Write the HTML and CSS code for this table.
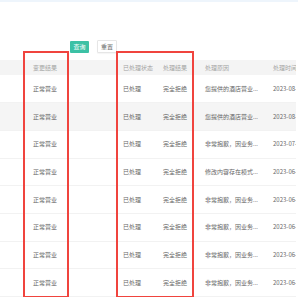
FILE: index.html
```html
<!DOCTYPE html>
<html lang="zh">
<head>
<meta charset="utf-8">
<link rel="stylesheet" href="styles.css">
</head>
<body>
<div class="topbar"></div>
<div class="toolbar">
  <button class="btn btn-primary">查询</button>
  <button class="btn">重置</button>
</div>
<div class="table-wrap">
  <table class="grid">
    <colgroup>
      <col class="c0"><col class="c1"><col class="c2"><col class="c3"><col class="c4"><col class="c5">
    </colgroup>
    <thead>
      <tr><th></th><th>变更结果</th><th>已处理状态</th><th>处理结果</th><th>处理原因</th><th>处理时间</th></tr>
    </thead>
    <tbody>
      <tr><td></td><td>正常营业</td><td>已处理</td><td>完全拒绝</td><td>您提供的酒店营业...</td><td>2023-08-03</td></tr>
      <tr class="hover"><td></td><td>正常营业</td><td>已处理</td><td>完全拒绝</td><td>您提供的酒店营业...</td><td>2023-08-01</td></tr>
      <tr><td></td><td>正常营业</td><td>已处理</td><td>完全拒绝</td><td>非常抱歉，因业务...</td><td>2023-07-05</td></tr>
      <tr><td></td><td>正常营业</td><td>已处理</td><td>完全拒绝</td><td>修改内容存在模式...</td><td>2023-06-16</td></tr>
      <tr><td></td><td>正常营业</td><td>已处理</td><td>完全拒绝</td><td>非常抱歉，因业务...</td><td>2023-06-12</td></tr>
      <tr><td></td><td>正常营业</td><td>已处理</td><td>完全拒绝</td><td>非常抱歉，因业务...</td><td>2023-06-10</td></tr>
      <tr><td></td><td>正常营业</td><td>已处理</td><td>完全拒绝</td><td>非常抱歉，因业务...</td><td>2023-06-08</td></tr>
      <tr><td></td><td>正常营业</td><td>已处理</td><td>完全拒绝</td><td>非常抱歉，因业务...</td><td>2023-06-15</td></tr>
    </tbody>
  </table>
  <div class="mark mark-a"></div>
  <div class="mark mark-b"></div>
</div>
</body>
</html>
```

FILE: styles.css
```css
html, body {
  margin: 0;
  padding: 0;
  background: #ffffff;
  font-family: "Noto Sans CJK SC", "Noto Sans", sans-serif;
  overflow: hidden;
}

.topbar {
  width: 298px;
  height: 2px;
  background: #eef5fc;
}

.toolbar {
  height: 58px;
  box-sizing: border-box;
  padding: 38px 0 0 70px;
  display: flex;
  align-items: flex-start;
  gap: 8px;
}

.btn {
  margin: 0;
  padding: 0;
  font-family: inherit;
  font-size: 6px;
  line-height: 1;
  height: 13px;
  width: 20px;
  border: 1px solid #e6e6e6;
  border-radius: 1px;
  background: #ffffff;
  color: #666666;
  display: flex;
  align-items: center;
  justify-content: center;
  box-shadow: 0 1px 1px rgba(0, 0, 0, 0.04);
}

.btn-primary {
  width: 19px;
  height: 12px;
  margin-top: 1px;
  border: none;
  background: #3cc1a5;
  color: #ffffff;
  box-shadow: none;
}

.table-wrap {
  position: relative;
  width: 296px;
}

.grid {
  border-collapse: collapse;
  table-layout: fixed;
  width: 330px;
  font-size: 6px;
  color: #666666;
  clip-path: inset(0 34px 0 0);
}

.c0 { width: 25px; }
.c1 { width: 90px; }
.c2 { width: 40px; }
.c3 { width: 42px; }
.c4 { width: 68px; }
.c5 { width: 65px; }

.grid th,
.grid td {
  padding: 0 0 0 8px;
  text-align: left;
  white-space: nowrap;
  overflow: hidden;
  line-height: 1;
}

.grid th {
  height: 15px;
  background: #f4f4f4;
  color: #a3a3a3;
  font-weight: normal;
}

.grid td {
  height: 27.7px;
  border-bottom: 1px solid #f2f2f2;
  box-sizing: border-box;
}

.grid tr.hover td {
  background: #f5f5f5;
}

.mark {
  position: absolute;
  top: -9px;
  height: 247px;
  border: 2px solid #f0443e;
  box-sizing: border-box;
}

.mark-a {
  left: 23px;
  width: 46px;
}

.mark-b {
  left: 116px;
  width: 78px;
}
```
